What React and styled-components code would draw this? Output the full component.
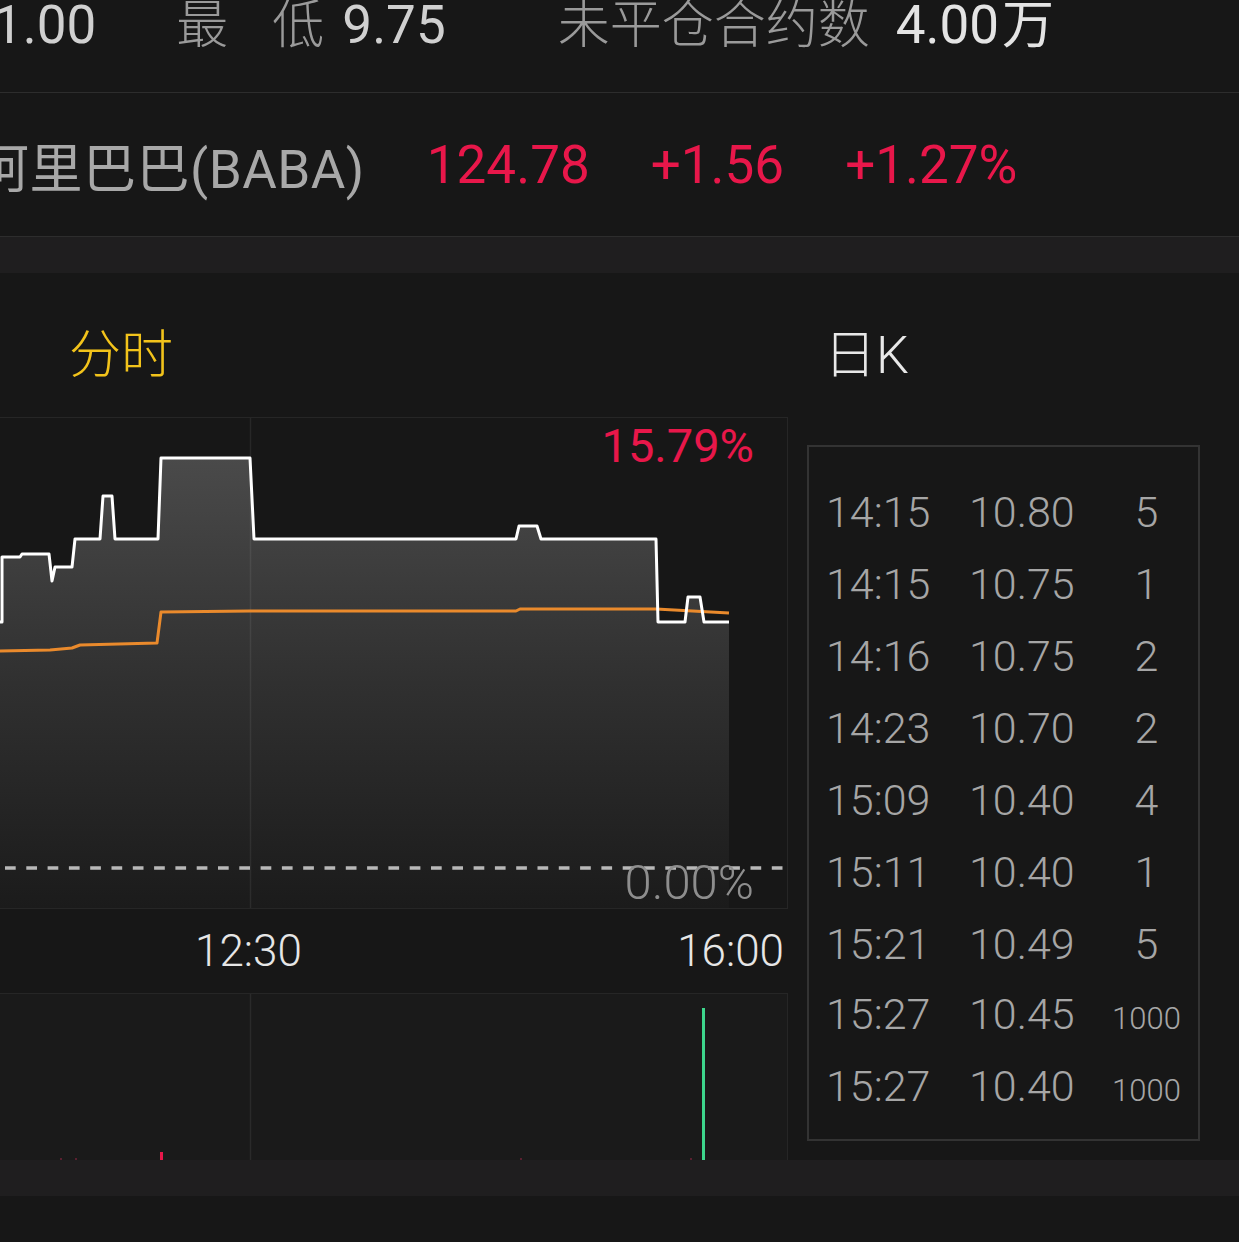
import React from "react";
import styled, { createGlobalStyle } from "styled-components";

const GlobalStyle = createGlobalStyle`
  html, body {
    margin: 0;
    padding: 0;
    background: #171717;
    width: 1239px;
    height: 1242px;
    overflow: hidden;
  }
  body {
    font-family: Roboto, "Noto Sans CJK SC", sans-serif;
    -webkit-font-smoothing: antialiased;
  }
`;

const Page = styled.div`
  width: 1239px;
  height: 1242px;
  display: flex;
  flex-direction: column;
  background: #171717;
  overflow: hidden;
`;

const QuoteRow = styled.div`
  height: 92px;
  flex: none;
  display: flex;
  align-items: baseline;
  border-bottom: 1px solid #2d2d2d;
  white-space: nowrap;
  line-height: 50px;
`;

const QLabel = styled.span`
  font-size: 52px;
  font-weight: 300;
  color: #9a9a9a;
  margin-left: ${(p) => p.$ml}px;
  letter-spacing: ${(p) => p.$ls || 0}px;
`;

const QValue = styled.span`
  font-size: 53px;
  font-weight: 400;
  color: ${(p) => (p.$bright ? "#e4e4e4" : "#d0d0d0")};
  margin-left: ${(p) => p.$ml}px;
`;

const QUnit = styled.span`
  font-size: 52px;
  margin-left: 3px;
`;

const TickerRow = styled.div`
  height: 143px;
  flex: none;
  display: flex;
  align-items: center;
  border-bottom: 1px solid #2d2d2d;
  white-space: nowrap;
`;

const TickerName = styled.span`
  font-size: 53px;
  font-weight: 400;
  color: #a8a8a8;
  margin-left: -24px;
  letter-spacing: 0.5px;
`;

const TickerNum = styled.span`
  font-size: 53px;
  font-weight: 400;
  color: #e8174a;
  margin-left: ${(p) => p.$ml}px;
`;

const Band = styled.div`
  height: ${(p) => p.$h}px;
  flex: none;
  background: #1f1e1f;
`;

const Tabs = styled.div`
  height: 144px;
  flex: none;
  display: flex;
  align-items: center;
  padding-top: 22px;
  box-sizing: border-box;
`;

const Tab = styled.span`
  font-size: 52px;
  font-weight: 300;
  color: ${(p) => (p.$active ? "#f2c31b" : "#e8e8e8")};
  margin-left: ${(p) => p.$ml}px;
  line-height: 52px;
`;

const Main = styled.div`
  height: 743px;
  flex: none;
  display: flex;
`;

const LeftCol = styled.div`
  width: 788px;
  flex: none;
  display: flex;
  flex-direction: column;
`;

const ChartBox = styled.div`
  position: relative;
  height: 492px;
  box-sizing: border-box;
  border-top: 1px solid #262626;
  border-bottom: 1px solid #262626;
  border-right: 1px solid #262626;
  background: #171717;
`;

const ChartSvg = styled.svg`
  display: block;
`;

const PctLabel = styled.span`
  position: absolute;
  right: 33px;
  top: ${(p) => p.$top}px;
  font-size: ${(p) => p.$size}px;
  font-weight: ${(p) => p.$weight};
  line-height: 1;
  color: ${(p) => p.$color};
`;

const TimeAxis = styled.div`
  height: 84px;
  flex: none;
  display: flex;
  align-items: center;
  padding-left: 195px;
  padding-right: 4px;
  box-sizing: border-box;
`;

const TimeLabel = styled.span`
  font-size: 44px;
  font-weight: 300;
  color: #e6e6e6;
  margin-left: ${(p) => (p.$push ? "auto" : "0")};
`;

const VolumeBox = styled.div`
  height: 167px;
  box-sizing: border-box;
  border-top: 1px solid #262626;
  border-right: 1px solid #262626;
  background: #1a1a1a;
`;

const RightCol = styled.div`
  flex: none;
  padding-left: 19px;
  padding-top: 28px;
`;

const TradeBox = styled.div`
  width: 393px;
  height: 696px;
  box-sizing: border-box;
  border: 2px solid #333333;
  padding: 29px 0 15px 17px;
`;

const TradeRow = styled.div`
  height: 72px;
  display: grid;
  grid-template-columns: 143px 126px 1fr;
  align-items: center;
  align-content: center;
  color: #a6a6a6;
  font-weight: 300;
`;

const Cell = styled.span`
  font-size: ${(p) => (p.$small ? 31 : 43)}px;
  line-height: 43px;
  text-align: ${(p) => (p.$center ? "center" : "left")};
  align-self: baseline;
`;

const trades = [
  ["14:15", "10.80", "5"],
  ["14:15", "10.75", "1"],
  ["14:16", "10.75", "2"],
  ["14:23", "10.70", "2"],
  ["15:09", "10.40", "4"],
  ["15:11", "10.40", "1"],
  ["15:21", "10.49", "5"],
  ["15:27", "10.45", "1000"],
  ["15:27", "10.40", "1000"],
];

const whitePts = [
  [-5, 204], [2, 204], [2, 139], [20, 139], [22, 136], [49, 136], [52, 163],
  [55, 149], [72, 149], [75, 121], [100, 121], [103, 78], [112, 78], [115, 121],
  [158, 121], [161, 40], [250, 40], [254, 121], [516, 121], [519, 108],
  [537, 108], [541, 121], [656, 121], [658, 204], [685, 204], [688, 179],
  [700, 179], [704, 204], [729, 204],
];

const orangePts = [
  [-5, 233], [50, 232], [72, 230], [80, 227], [157, 225], [161, 194],
  [250, 193], [516, 193], [520, 191], [656, 191], [729, 195],
];

const toPath = (pts) =>
  pts.map(([x, y], i) => `${i ? "L" : "M"}${x} ${y}`).join(" ");

function PriceChart() {
  const line = toPath(whitePts);
  const fill = `${line} L729 490 L-5 490 Z`;
  return (
    <ChartSvg width="787" height="490" viewBox="0 0 787 490">
      <defs>
        <linearGradient id="fillGrad" gradientUnits="userSpaceOnUse" x1="0" y1="40" x2="0" y2="490">
          <stop offset="0" stopColor="#4a4a4a" />
          <stop offset="0.5" stopColor="#303030" />
          <stop offset="1" stopColor="#1b1b1b" />
        </linearGradient>
      </defs>
      <path d={fill} fill="url(#fillGrad)" />
      <line x1="250.5" y1="0" x2="250.5" y2="490" stroke="rgba(255,255,255,0.07)" strokeWidth="1.5" />
      <path d={toPath(orangePts)} fill="none" stroke="#ea8a2c" strokeWidth="3" strokeLinejoin="round" />
      <path d={line} fill="none" stroke="#ffffff" strokeWidth="3" strokeLinejoin="round" />
      <line x1="5" y1="450" x2="787" y2="450" stroke="#b8b8b8" strokeWidth="3.5" strokeDasharray="10.7 10.6" />
    </ChartSvg>
  );
}

function VolumeChart() {
  return (
    <ChartSvg width="787" height="166" viewBox="0 0 787 166">
      <line x1="250.5" y1="0" x2="250.5" y2="166" stroke="#2a2a2a" strokeWidth="1.5" />
      <rect x="160" y="158" width="3" height="8" fill="#e8174a" />
      <rect x="702" y="14" width="3" height="152" fill="#3dd68c" />
      <rect x="60" y="164" width="2" height="2" fill="#5a2030" />
      <rect x="75" y="164" width="2" height="2" fill="#5a2030" />
      <rect x="520" y="164" width="2" height="2" fill="#5a2030" />
      <rect x="690" y="164" width="2" height="2" fill="#5a2030" />
    </ChartSvg>
  );
}

export default function App() {
  return (
    <>
      <GlobalStyle />
      <Page>
        <QuoteRow>
          <QValue $ml={-7}>1.00</QValue>
          <QLabel $ml={80} $ls={-4}>最　低</QLabel>
          <QValue $ml={22}>9.75</QValue>
          <QLabel $ml={112}>未平仓合约数</QLabel>
          <QValue $ml={26} $bright>
            4.00<QUnit>万</QUnit>
          </QValue>
        </QuoteRow>
        <TickerRow>
          <TickerName>阿里巴巴(BABA)</TickerName>
          <TickerNum $ml={62}>124.78</TickerNum>
          <TickerNum $ml={61}>+1.56</TickerNum>
          <TickerNum $ml={61}>+1.27%</TickerNum>
        </TickerRow>
        <Band $h={36} />
        <Tabs>
          <Tab $active $ml={69}>分时</Tab>
          <Tab $ml={651}>日K</Tab>
        </Tabs>
        <Main>
          <LeftCol>
            <ChartBox>
              <PriceChart />
              <PctLabel $top={4} $size={47} $weight={400} $color="#e8174a">15.79%</PctLabel>
              <PctLabel $top={440} $size={49} $weight={300} $color="#8e8e8e">0.00%</PctLabel>
            </ChartBox>
            <TimeAxis>
              <TimeLabel>12:30</TimeLabel>
              <TimeLabel $push>16:00</TimeLabel>
            </TimeAxis>
            <VolumeBox>
              <VolumeChart />
            </VolumeBox>
          </LeftCol>
          <RightCol>
            <TradeBox>
              {trades.map(([t, p, v], i) => (
                <TradeRow key={i}>
                  <Cell>{t}</Cell>
                  <Cell>{p}</Cell>
                  <Cell $center $small={v.length > 2}>{v}</Cell>
                </TradeRow>
              ))}
            </TradeBox>
          </RightCol>
        </Main>
        <Band $h={36} />
      </Page>
    </>
  );
}
